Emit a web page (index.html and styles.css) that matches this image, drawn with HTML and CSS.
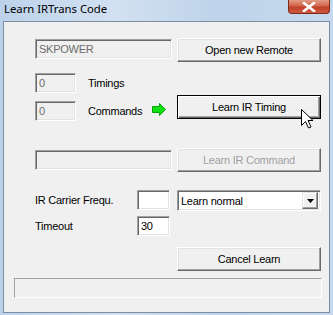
FILE: index.html
```html
<!DOCTYPE html>
<html lang="en">
<head>
    <meta charset="UTF-8">
    <title>Learn IRTrans Code</title>
    <link rel="stylesheet" href="styles.css">
</head>
<body>
    <div class="window">
        <!-- Title bar -->
        <div class="titlebar">
            <span class="title">Learn IRTrans Code</span>
            <div class="close-btn">
                <svg width="14" height="10" viewBox="0 0 14 10">
                    <path d="M2 1 L12 9 M12 1 L2 9" stroke="#fff" stroke-width="2.6" stroke-linecap="square"/>
                </svg>
            </div>
        </div>

        <div class="client">
            <div class="row row-remote">
                <div class="left">
                    <div class="field disabled wide">SKPOWER</div>
                </div>
                <button class="btn">Open new Remote</button>
            </div>

            <div class="row row-timings">
                <div class="left">
                    <div class="field disabled small">0</div>
                    <span class="label">Timings</span>
                </div>
            </div>

            <div class="row row-commands">
                <div class="left">
                    <div class="field disabled small">0</div>
                    <span class="label">Commands</span>
                    <svg class="arrow" width="14" height="13" viewBox="0 0 14 13">
                        <path d="M0.5 3.5 H7.5 V0.5 L13.5 6.5 L7.5 12.5 V9.5 H0.5 Z" fill="#10e010" stroke="#0aa00a" stroke-width="1"/>
                    </svg>
                </div>
                <button class="btn default">Learn IR Timing</button>
            </div>

            <div class="row row-command">
                <div class="left">
                    <div class="field disabled wide"></div>
                </div>
                <button class="btn" disabled>Learn IR Command</button>
            </div>

            <div class="row row-freq">
                <div class="left">
                    <span class="label first">IR Carrier Frequ.</span>
                    <div class="field num"></div>
                </div>
                <div class="select">
                    <span class="select-text">Learn normal</span>
                    <div class="select-btn">
                        <svg width="7" height="4" viewBox="0 0 7 4"><path d="M0 0 H7 L3.5 4 Z" fill="#000"/></svg>
                    </div>
                </div>
            </div>

            <div class="row row-timeout">
                <div class="left">
                    <span class="label first">Timeout</span>
                    <div class="field num">30</div>
                </div>
            </div>

            <div class="row row-cancel">
                <div class="left"></div>
                <button class="btn">Cancel Learn</button>
            </div>

            <div class="statusbar"></div>
        </div>

        <!-- mouse pointer -->
        <svg class="cursor" width="13" height="20" viewBox="0 0 13 20">
            <path d="M0.5 0.5 V16.5 L4.5 12.5 L7.5 19 L10 18 L7 11.5 H12 Z" fill="#fff" stroke="#000" stroke-width="1" stroke-linejoin="miter"/>
        </svg>
    </div>
</body>
</html>
```

FILE: styles.css
```css
* {
    margin: 0;
    padding: 0;
    box-sizing: border-box;
}

body {
    background: #ffffff;
    font-family: "Liberation Sans", Arial, sans-serif;
    font-size: 11px;
    letter-spacing: -0.25px;
}

.window {
    position: relative;
    width: 333px;
    height: 315px;
    padding: 0 3px 2px 3px;
    display: flex;
    flex-direction: column;
    background: linear-gradient(90deg, #bcd2ea 0%, #d2e1f1 35%, #bed3ea 65%, #c6d9ee 100%);
}

.titlebar {
    height: 21px;
    display: flex;
    align-items: flex-start;
}

.title {
    font-family: "Noto Sans", "Open Sans", sans-serif;
    font-size: 11.3px;
    letter-spacing: 0;
    line-height: 18px;
    padding-left: 1px;
    color: #000;
}

.close-btn {
    margin-left: auto;
    width: 42px;
    height: 14px;
    border: 1px solid #7e2a1c;
    border-top: none;
    border-radius: 0 0 4px 4px;
    background: linear-gradient(180deg, #e49b86 0%, #d2654c 45%, #c0402a 55%, #cf5a3e 100%);
    display: flex;
    align-items: center;
    justify-content: center;
}

.client {
    flex: 1;
    border: 1px solid #7c8ea4;
    background: #f0f0f0;
}

.row {
    display: flex;
    align-items: flex-start;
    padding-left: 31px;
}

.left {
    width: 137px;
    margin-right: 5px;
    display: flex;
    align-items: flex-start;
}

.label {
    margin-left: 12px;
    line-height: 20px;
    color: #000;
}

.label.first {
    margin-left: 0;
}

.field {
    height: 20px;
    border: 1px solid;
    border-color: #a0a0a0 #ffffff #ffffff #a0a0a0;
    box-shadow: inset 1px 1px #696969, inset -1px -1px #e3e3e3;
    background: #fff;
    padding-left: 3px;
    line-height: 18px;
    color: #000;
}

.field.disabled {
    background: #f0f0f0;
    color: #6d6d6d;
}

.field.wide {
    width: 137px;
}

.field.small {
    width: 41px;
}

.field.num {
    width: 33px;
    margin-left: auto;
    margin-right: 2px;
}

.btn {
    width: 144px;
    height: 24px;
    font-family: "Liberation Sans", Arial, sans-serif;
    font-size: 11px;
    letter-spacing: -0.25px;
    color: #000;
    background: #f0f0f0;
    border: 1px solid;
    border-color: #ffffff #696969 #696969 #ffffff;
    box-shadow: inset -1px -1px #a0a0a0, inset 1px 1px #e3e3e3;
}

.btn:disabled {
    color: #a0a0a0;
}

.btn.default {
    outline: 1px solid #000;
    outline-offset: -1px;
    border-color: #000;
    box-shadow: inset 1px 1px #fff, inset -1px -1px #696969, inset -2px -2px #a0a0a0;
}

/* row spacing */
.row-remote { margin-top: 16px; height: 24px; }
.row-remote .field { margin-top: 1px; }

.row-timings { margin-top: 11px; height: 20px; }

.row-commands { margin-top: 2px; height: 26px; }
.row-commands .field { margin-top: 6px; }
.row-commands .label { margin-top: 6px; }

.arrow {
    margin-left: auto;
    margin-right: 6px;
    margin-top: 8px;
}

.row-command { margin-top: 27px; height: 24px; }
.row-command .field { margin-top: 2px; }

.row-freq { margin-top: 18px; height: 21px; }

.row-timeout { margin-top: 5px; height: 20px; }

.row-cancel { margin-top: 11px; height: 24px; }

.select {
    width: 144px;
    height: 21px;
    display: flex;
    align-items: center;
    border: 1px solid;
    border-color: #a0a0a0 #ffffff #ffffff #a0a0a0;
    box-shadow: inset 1px 1px #696969, inset -1px -1px #e3e3e3;
    background: #fff;
    padding: 2px 2px 2px 3px;
}

.select-text {
    flex: 1;
    color: #000;
}

.select-btn {
    width: 16px;
    height: 17px;
    background: #f0f0f0;
    border: 1px solid;
    border-color: #e3e3e3 #696969 #696969 #e3e3e3;
    box-shadow: inset -1px -1px #a0a0a0, inset 1px 1px #fff;
    display: flex;
    align-items: center;
    justify-content: center;
}

.statusbar {
    margin: 7px 0 0 10px;
    width: 308px;
    height: 20px;
    border: 1px solid;
    border-color: #a0a0a0 #ffffff #ffffff #a0a0a0;
}

.cursor {
    position: absolute;
    left: 301px;
    top: 109px;
}
```
